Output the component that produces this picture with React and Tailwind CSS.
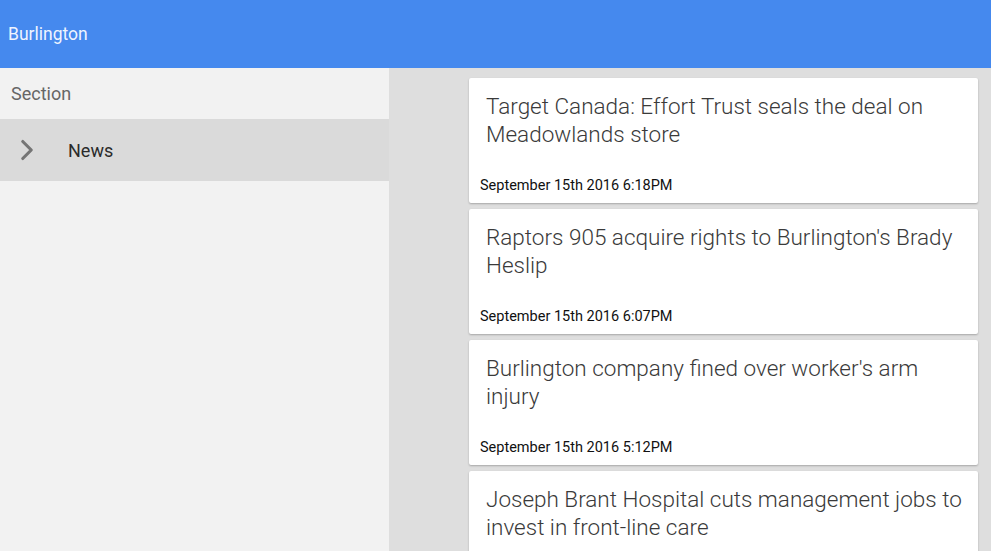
import { ChevronRight } from 'lucide-react';

const articles = [
  { title: 'Target Canada: Effort Trust seals the deal on Meadowlands store', date: 'September 15th 2016 6:18PM' },
  { title: "Raptors 905 acquire rights to Burlington's Brady Heslip", date: 'September 15th 2016 6:07PM' },
  { title: "Burlington company fined over worker's arm injury", date: 'September 15th 2016 5:12PM' },
  { title: 'Joseph Brant Hospital cuts management jobs to invest in front-line care', date: 'September 15th 2016 4:40PM' },
];

function NewsCard({ article }) {
  return (
    <div className="flex h-[125px] shrink-0 flex-col justify-between rounded-[2px] bg-white shadow-[0_1px_2px_rgba(0,0,0,0.25)]">
      <p className="pl-[17px] pr-3 pt-[14px] text-[22.5px] font-light leading-[28px] text-[#3a3a3a]">{article.title}</p>
      <p className="pb-[10px] pl-[11px] text-[14.5px] leading-[15px] text-[#111]">{article.date}</p>
    </div>
  );
}

export default function App() {
  return (
    <div className="flex h-[551px] flex-col overflow-hidden font-['Roboto',sans-serif]">
      <header className="flex h-[68px] shrink-0 items-center bg-[#4589ee] px-2 text-[17.5px] text-[#eef4ff]">
        Burlington
      </header>
      <div className="flex min-h-0 flex-1">
        <aside className="w-[389px] shrink-0 bg-[#f2f2f2]">
          <div className="flex h-[51px] items-center px-[11px] text-[18px] text-[#666]">Section</div>
          <div className="flex h-[62px] items-center bg-[#dadada]">
            <ChevronRight className="ml-[10px] h-[34px] w-[34px] text-[#757575]" strokeWidth={2.2} />
            <span className="ml-[24px] text-[18px] text-[#2a2a2a]">News</span>
          </div>
        </aside>
        <main className="flex flex-1 flex-col gap-[6px] overflow-hidden bg-[#dedede] pl-[80px] pr-[13px] pt-[10px]">
          {articles.map((a) => (
            <NewsCard key={a.date} article={a} />
          ))}
        </main>
      </div>
    </div>
  );
}
